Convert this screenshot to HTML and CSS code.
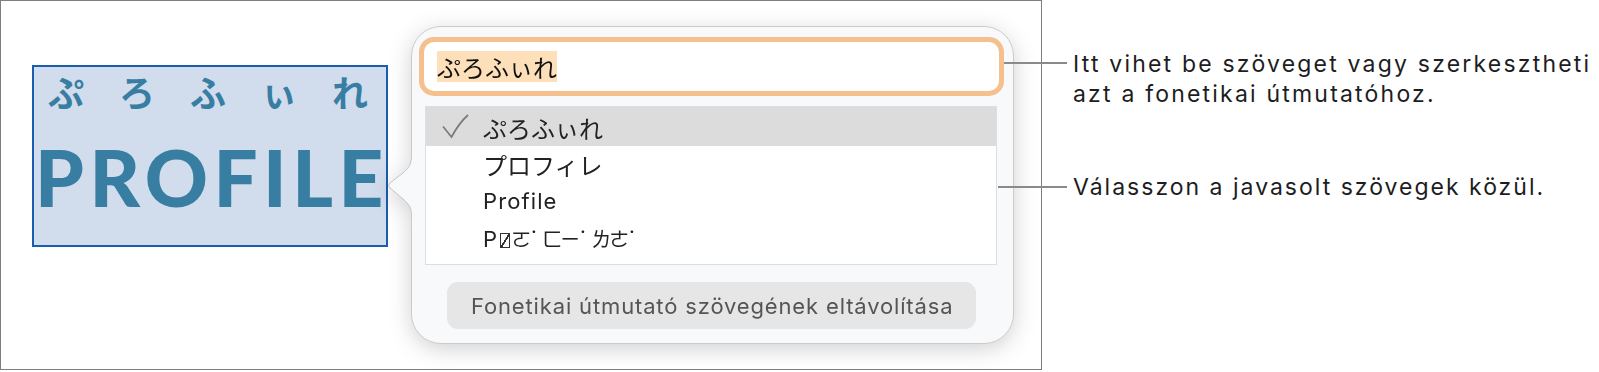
FILE: index.html
```html
<!DOCTYPE html>
<html lang="hu">
<head>
<meta charset="utf-8">
<title>Fonetikai útmutató</title>
<link rel="stylesheet" href="styles.css">
</head>
<body>
<div class="page">
  <div class="frame">
    <div class="word-box">
      <div class="ruby-row"><span>ぷ</span><span>ろ</span><span>ふ</span><span>ぃ</span><span>れ</span></div>
      <div class="word">PROFILE</div>
    </div>
    <div class="popover">
      <svg class="pointer" width="28" height="54" viewBox="0 0 28 54" aria-hidden="true">
        <path class="pointer-fill" d="M24 0 C24 6 20 9 16 13 L3 23 Q0 25.5 3 28 L16 39 C20 43 24 46 24 52 L28 52 L28 0 Z"/>
        <path class="pointer-edge" d="M24 0 C24 6 20 9 16 13 L3 23 Q0 25.5 3 28 L16 39 C20 43 24 46 24 52"/>
      </svg>
      <div class="field"><span class="field-text">ぷろふぃれ</span></div>
      <ul class="options">
        <li class="option selected">
          <svg class="check" width="28" height="26" viewBox="0 0 28 26" aria-hidden="true"><path d="M1 12.5 L9.5 23 Q17 9 26 1"/></svg>
          <span class="jp">ぷろふぃれ</span>
        </li>
        <li class="option"><span class="jp">プロフィレ</span></li>
        <li class="option">Profile</li>
        <li class="option">P<span class="tofu"></span><span class="bpmf">ㄛ</span><span class="tone">˙</span><span class="bpmf">ㄈㄧ</span><span class="tone">˙</span><span class="bpmf">ㄌㄜ</span><span class="tone">˙</span></li>
      </ul>
      <button class="remove" type="button">Fonetikai útmutató szövegének eltávolítása</button>
    </div>
  </div>
  <div class="notes">
    <p class="note note-1">Itt vihet be szöveget vagy szerkesztheti<br>azt a fonetikai útmutatóhoz.</p>
    <p class="note note-2">Válasszon a javasolt szövegek közül.</p>
  </div>
  <div class="leader leader-1"></div>
  <div class="leader leader-2"></div>
</div>
</body>
</html>
```
FILE: styles.css
```css
* { box-sizing: border-box; }
html, body { margin: 0; padding: 0; background: #ffffff; }
body {
  font-family: Inter, "Noto Sans", "Noto Sans CJK JP", sans-serif;
  color: #1d1d1f;
}
.page {
  position: relative;
  display: flex;
  align-items: flex-start;
  width: 1599px;
  height: 372px;
}
.frame {
  flex: none;
  width: 1042px;
  height: 370px;
  border: 1px solid #7f7f7f;
  display: flex;
  align-items: flex-start;
  padding: 25px 0 0 31px;
}
.word-box {
  flex: none;
  width: 356px;
  height: 182px;
  margin-top: 39px;
  border: 2px solid #1b5cae;
  background: #d1dcec;
  color: #387ea2;
  display: flex;
  flex-direction: column;
}
.ruby-row {
  display: flex;
  justify-content: space-between;
  padding: 6px 18px 0 14px;
  font-family: "Noto Sans CJK JP", sans-serif;
  font-weight: 700;
  font-size: 36px;
  line-height: 36px;
}
.word {
  font-family: Lato, "Open Sans", sans-serif;
  font-weight: 900;
  font-size: 78px;
  line-height: 78px;
  letter-spacing: 5.5px;
  margin-top: 29px;
  padding-left: 1px;
  white-space: nowrap;
}
.popover {
  flex: none;
  position: relative;
  width: 603px;
  height: 318px;
  margin-left: 23px;
  border: 1px solid #cbcbcb;
  border-radius: 30px;
  background: #f8f9fa;
  padding: 15px 0 0 12px;
  display: flex;
  flex-direction: column;
  align-items: flex-start;
  filter: drop-shadow(0 5px 11px rgba(0, 0, 0, 0.18));
}
.pointer {
  position: absolute;
  left: -25px;
  top: 133px;
  overflow: visible;
}
.pointer-fill { fill: #f8f9fa; }
.pointer-edge { fill: none; stroke: #c4c4c4; stroke-width: 1; }
.field {
  width: 575px;
  height: 49px;
  background: #ffffff;
  border-radius: 10px;
  box-shadow: 0 0 0 5px #f5bf8e;
  display: flex;
  align-items: center;
  padding-left: 13px;
}
.field-text {
  display: inline-block;
  height: 31px;
  line-height: 31px;
  background: #fddfb9;
  font-family: "Noto Sans CJK JP", sans-serif;
  font-size: 24px;
  color: #111;
}
.options {
  list-style: none;
  margin: 15px 0 0 1px;
  padding: 0 0 8px;
  width: 572px;
  height: 159px;
  background: #ffffff;
  border: 1px solid #dedede;
}
.option {
  position: relative;
  height: 37px;
  line-height: 37px;
  padding-left: 57px;
  font-size: 22px;
  letter-spacing: 1.1px;
  color: #222;
  white-space: nowrap;
}
.option.selected {
  height: 39px;
  line-height: 41px;
  background: #dcdcdc;
}
.jp {
  font-family: "Noto Sans CJK JP", sans-serif;
  font-size: 24px;
  letter-spacing: 0;
}
.check {
  position: absolute;
  left: 16px;
  top: 7px;
}
.check path {
  fill: none;
  stroke: #7a7a7a;
  stroke-width: 1.7;
  stroke-linejoin: miter;
}
.tofu {
  display: inline-block;
  width: 10px;
  height: 15px;
  margin: 0 1px 0 2px;
  vertical-align: -1px;
  border: 1.5px solid #333;
  background: linear-gradient(to bottom right, transparent 45%, #333 46%, #333 58%, transparent 59%);
}
.bpmf {
  font-family: "Noto Sans CJK TC", sans-serif;
  font-size: 20px;
  letter-spacing: -2px;
}
.tone {
  display: inline-block;
  width: 13px;
  padding-left: 2px;
  font-family: Inter, sans-serif;
  font-size: 22px;
  letter-spacing: 0;
}
.remove {
  width: 529px;
  height: 47px;
  margin: 17px 0 0 23px;
  border: none;
  border-radius: 11px;
  background: #e6e6e7;
  color: #555;
  font-family: Inter, "Noto Sans", sans-serif;
  font-size: 22px;
  letter-spacing: 0.85px;
  text-align: left;
  padding: 0 0 0 24px;
}
.notes {
  flex: none;
  padding: 49px 0 0 31px;
}
.note {
  margin: 0;
  font-size: 23px;
  letter-spacing: 2.2px;
  line-height: 30px;
  color: #1d1d1f;
  white-space: nowrap;
}
.note-2 { margin-top: 63px; letter-spacing: 2px; }
.leader {
  position: absolute;
  height: 2px;
  background: #8a8a8a;
}
.leader-1 { left: 1004px; top: 62px; width: 63px; }
.leader-2 { left: 998px; top: 186px; width: 69px; }
```
